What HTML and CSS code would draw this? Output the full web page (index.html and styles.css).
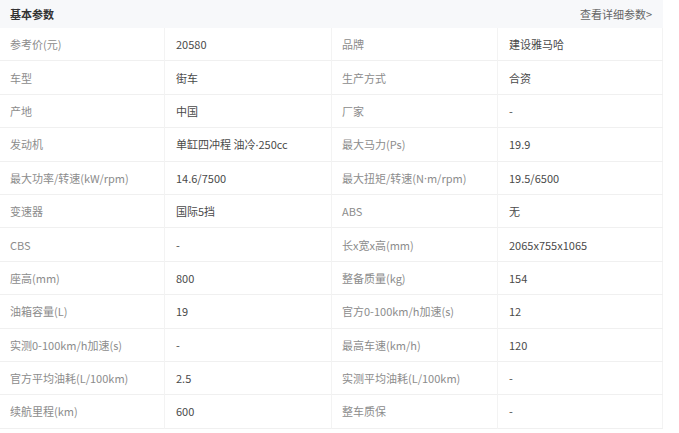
FILE: index.html
```html
<!DOCTYPE html>
<html lang="zh">
<head>
<meta charset="utf-8">
<link rel="stylesheet" href="styles.css">
</head>
<body>
<div class="panel">
  <div class="head">
    <span class="title">基本参数</span>
    <a class="more">查看详细参数&gt;</a>
  </div>
  <div class="grid">
    <div class="k">参考价(元)</div><div class="v">20580</div><div class="k">品牌</div><div class="v">建设雅马哈</div>
    <div class="k">车型</div><div class="v">街车</div><div class="k">生产方式</div><div class="v">合资</div>
    <div class="k">产地</div><div class="v">中国</div><div class="k">厂家</div><div class="v">-</div>
    <div class="k">发动机</div><div class="v">单缸四冲程 油冷<span class="dot">·</span>250cc</div><div class="k">最大马力(Ps)</div><div class="v">19.9</div>
    <div class="k">最大功率/转速(kW/rpm)</div><div class="v">14.6/7500</div><div class="k">最大扭矩/转速(N<span class="dot">·</span>m/rpm)</div><div class="v">19.5/6500</div>
    <div class="k">变速器</div><div class="v">国际5挡</div><div class="k">ABS</div><div class="v">无</div>
    <div class="k">CBS</div><div class="v">-</div><div class="k">长x宽x高(mm)</div><div class="v">2065x755x1065</div>
    <div class="k">座高(mm)</div><div class="v">800</div><div class="k">整备质量(kg)</div><div class="v">154</div>
    <div class="k">油箱容量(L)</div><div class="v">19</div><div class="k">官方0-100km/h加速(s)</div><div class="v">12</div>
    <div class="k">实测0-100km/h加速(s)</div><div class="v">-</div><div class="k">最高车速(km/h)</div><div class="v">120</div>
    <div class="k">官方平均油耗(L/100km)</div><div class="v">2.5</div><div class="k">实测平均油耗(L/100km)</div><div class="v">-</div>
    <div class="k">续航里程(km)</div><div class="v">600</div><div class="k">整车质保</div><div class="v">-</div>
  </div>
</div>
</body>
</html>
```

FILE: styles.css
```css
html, body {
  margin: 0;
  padding: 0;
  background: #ffffff;
}
body {
  font-family: "Noto Sans CJK SC", "Noto Sans", sans-serif;
  font-size: 11px;
}
.panel {
  width: 663px;
}
.head {
  height: 28px;
  background: #f7f8fa;
  display: flex;
  align-items: center;
  justify-content: space-between;
  padding: 0 10px 0 10px;
  box-sizing: border-box;
}
.title {
  font-weight: bold;
  color: #333;
  font-size: 11px;
}
.more {
  color: #666;
  font-size: 11px;
  margin-right: 1px;
}
.grid {
  display: grid;
  grid-template-columns: 165px 167px 166px 165px;
  grid-auto-rows: 33.4px;
  border-right: 1px solid #f3f3f3;
}
.k, .v {
  display: flex;
  align-items: center;
  border-bottom: 1px solid #f0f0f0;
  border-right: 1px solid #f3f3f3;
  box-sizing: border-box;
  white-space: pre;
}
.k {
  padding-left: 10px;
  color: #8c8c8c;
}
.v {
  padding-left: 11px;
  color: #4a4a4a;
}
.v:nth-child(4n) {
  border-right: none;
}
.dot {
  font-family: "Noto Sans", sans-serif;
}
```
